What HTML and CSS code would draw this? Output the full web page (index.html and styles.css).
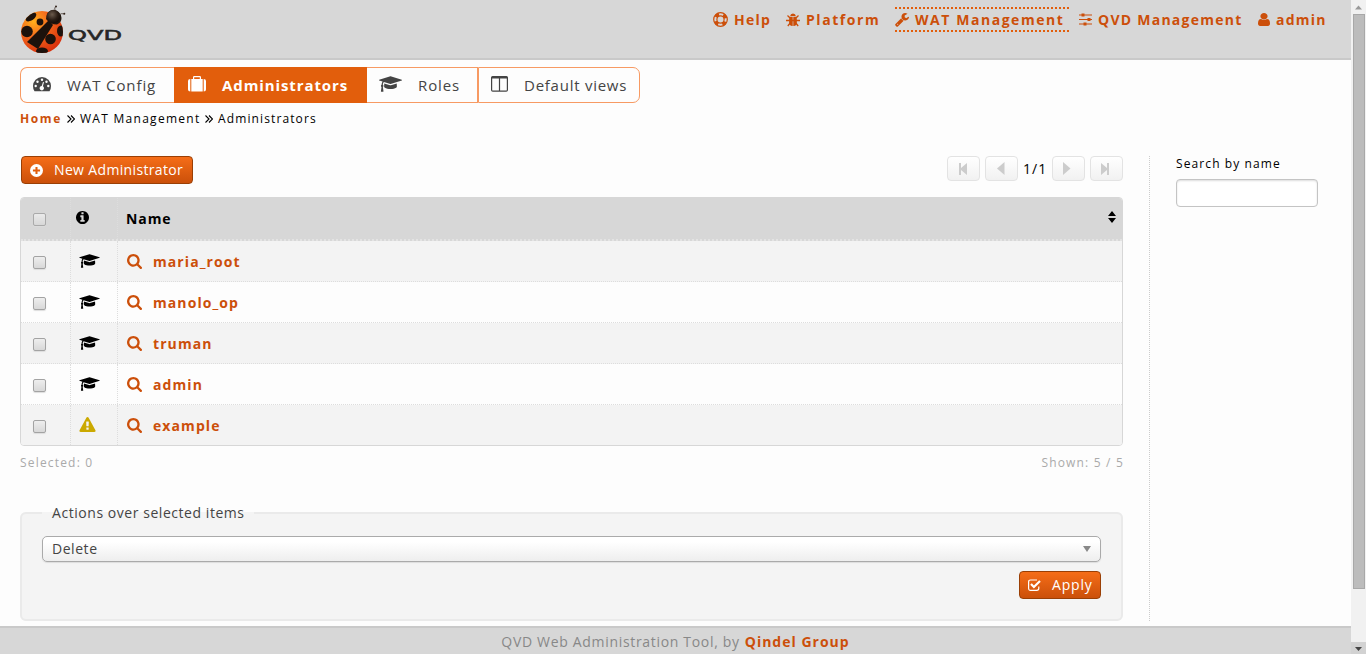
FILE: index.html
```html
<!DOCTYPE html>
<html lang="en">
<head>
<meta charset="utf-8">
<title>QVD WAT - Administrators</title>
<link rel="stylesheet" href="styles.css">
</head>
<body>
<svg class="defs" aria-hidden="true">
  <symbol id="cap" viewBox="0 0 2304 1792"><path d="M1774 836l18 316q4 69-82 128t-235 93.5-323 34.5-323-34.5-235-93.5-82-128l18-316 574 181q22 7 48 7t48-7zm530-324q0 23-22 31l-1120 352q-4 1-10 1t-10-1l-652-206q-43 34-71 111.5t-34 178.5q63 36 63 109 0 69-58 107l58 433q2 14-8 25-9 11-24 11h-192q-15 0-24-11-10-11-8-25l58-433q-58-38-58-107 0-73 65-111 11-207 98-330l-333-104q-22-8-22-31t22-31l1120-352q4-1 10-1t10 1l1120 352q22 8 22 31z"/></symbol>
  <symbol id="search" viewBox="64 128 1664 1664"><path d="M1216 832q0-185-131.5-316.5t-316.5-131.5-316.5 131.5-131.5 316.5 131.5 316.5 316.5 131.5 316.5-131.5 131.5-316.5zm512 832q0 52-38 90t-90 38q-54 0-90-38l-343-342q-179 124-399 124-143 0-273.5-55.5t-225-150-150-225-55.5-273.5 55.5-273.5 150-225 225-150 273.5-55.5 273.5 55.5 225 150 150 225 55.5 273.5q0 220-124 399l343 343q37 37 37 90z"/></symbol>
</svg>
<div class="page">
  <div class="content">
    <header class="header">
      <svg class="logo" width="106" height="54" viewBox="0 0 106 54">
        <defs>
          <radialGradient id="shell" cx=".3" cy=".25" r=".8"><stop offset="0" stop-color="#ffb01c"/><stop offset=".45" stop-color="#f4691c"/><stop offset="1" stop-color="#d8300c"/></radialGradient>
          <radialGradient id="head" cx=".4" cy=".35" r=".7"><stop offset="0" stop-color="#6b5a4c"/><stop offset=".6" stop-color="#2a1d15"/><stop offset="1" stop-color="#120a06"/></radialGradient>
          <clipPath id="body"><circle cx="22" cy="32" r="21"/></clipPath>
        </defs>
        <circle cx="22" cy="32" r="21" fill="url(#shell)"/>
        <g clip-path="url(#body)" fill="#1d120c">
          <path d="M29 20L33 25 18 49 7 42Z"/>
          <ellipse cx="7" cy="31.500" rx="5.800" ry="5.800"/>
          <circle cx="20" cy="22" r="3.400"/>
          <ellipse cx="11" cy="17" rx="6" ry="3.300" transform="rotate(-35 11 17)"/>
          <circle cx="30.500" cy="39" r="5.300"/>
          <ellipse cx="41" cy="31" rx="4" ry="5.500"/>
          <ellipse cx="22" cy="51" rx="6" ry="3.500"/>
        </g>
        <path d="M26 19Q26 11 33 10Q41 11 41.500 18Q41.500 22.500 37 24.500Q30 24.500 26 19Z" fill="#21160f"/>
        <circle cx="33.500" cy="16.500" r="6.800" fill="url(#head)"/>
        <path d="M35 11Q34 7 36 6.500M39 15Q41 13 44 13.800" stroke="#33251c" stroke-width=".7" fill="none"/>
        <circle cx="36" cy="6.500" r="1" fill="#33251c"/><circle cx="44.300" cy="13.800" r="1" fill="#33251c"/>
        <text class="brand" x="48" y="40.200" textLength="54" lengthAdjust="spacingAndGlyphs">QVD</text>
      </svg>
      <nav class="menu">
        <a><svg width="15" height="15" viewBox="0 0 15 15" fill="none" stroke="currentColor"><circle cx="7.500" cy="7.500" r="6.800" stroke-width="1.200"/><circle cx="7.500" cy="7.500" r="3.600" stroke-width="1.200"/><circle cx="7.500" cy="7.500" r="5.300" stroke-width="3.400" stroke-dasharray="4 4.325" stroke-dashoffset="-2.160"/></svg>Help</a>
        <a class="spaced"><svg width="14" height="14" viewBox="0 0 14 14"><path fill="currentColor" d="M4.200 3Q4.400.500 7 .500T9.800 3ZM3.400 3.700H6.700V13Q4.500 13 3.600 11.500T3.400 3.700ZM7.300 3.700H10.600Q11.200 10 10.400 11.500T7.300 13Z"/><path d="M1.500 2.500L4 5M12.500 2.500L10 5M0 7.500H14M1.800 13L4.200 10M12.200 13L9.800 10" stroke="currentColor" stroke-width="1.300"/></svg>Platform</a>
        <a class="spaced current"><svg width="14" height="14" viewBox="64 128 1664 1664"><path fill="currentColor" d="M448 1472q0-26-19-45t-45-19-45 19-19 45 19 45 45 19 45-19 19-45zm644-420l-682 682q-37 37-90 37-52 0-91-37l-106-108q-38-36-38-90 0-53 38-91l681-681q39 98 114.500 173.500t173.500 114.500zm634-435q0 39-23 106-47 134-164.500 217.500t-258.500 83.500q-185 0-316.500-131.500t-131.500-316.500 131.500-316.500 316.500-131.500q58 0 121.500 16.500t107.500 46.500q16 11 16 28t-16 28l-293 169v224l193 107q5-3 79-48.500t135.500-81 70.500-35.500q15 0 23.500 10t8.500 25z"/></svg>WAT Management</a>
        <a><svg width="13" height="13" viewBox="0 0 13 13"><path d="M0 2H13M0 6.500H13M0 11H13" stroke="currentColor" stroke-width="1.200"/><path fill="currentColor" d="M2.500.500h3v3h-3zM8.500 5h3v3h-3zM4.500 9.500h3v3h-3z"/></svg>QVD Management</a>
        <a><svg width="12" height="13" viewBox="256 128 1280 1536" preserveAspectRatio="none"><path fill="currentColor" d="M1536 1399q0 109-62.500 187t-150.500 78h-854q-88 0-150.500-78t-62.500-187q0-85 8.500-160.500t31.500-152 58.500-131 94-89 134.500-34.500q131 128 313 128t313-128q76 0 134.500 34.500t94 89 58.500 131 31.500 152 8.500 160.500zm-256-887q0 159-112.500 271.500t-271.500 112.500-271.500-112.500-112.500-271.500 112.500-271.500 271.500-112.500 271.500 112.500 112.500 271.500z"/></svg>admin</a>
      </nav>
    </header>

    <div class="tabs">
      <a class="tab tab-config"><svg width="18" height="15" viewBox="0 0 18 15"><path fill="currentColor" d="M0 9A9 9 0 0 1 18 9Q18 12 16.500 14.300H1.500Q0 12 0 9Z"/><g fill="#fdfdfd"><circle cx="2.700" cy="9" r="1.200"/><circle cx="4.500" cy="4.700" r="1.200"/><circle cx="9" cy="2.800" r="1.200"/><circle cx="13.500" cy="4.700" r="1.200"/><circle cx="15.300" cy="9" r="1.200"/><path d="M10 5L11 5.200 9.900 9.300A2.200 2.200 0 1 1 8.700 9Z"/></g></svg><span>WAT Config</span></a>
      <a class="tab tab-admins"><svg width="18" height="16" viewBox="0 0 18 16"><path fill="currentColor" d="M2.300 3V15.500Q0 15.500 0 13.500V5Q0 3 2.300 3ZM3.300 3H5V1.200Q5 0 6.200 0H11.800Q13 0 13 1.200V3H14.700V15.500H3.300ZM6.200 3H11.800V1.300H6.200ZM15.700 3Q18 3 18 5V13.500Q18 15.500 15.700 15.500Z"/></svg><span>Administrators</span></a>
      <a class="tab tab-roles"><svg width="23" height="18"><use href="#cap" fill="currentColor"/></svg><span>Roles</span></a>
      <a class="tab tab-views"><svg width="17" height="16" viewBox="0 0 17 16"><path fill="none" stroke="currentColor" stroke-width="1.200" d="M.600 1.500V14Q.600 15.200 1.800 15.200H15.200Q16.400 15.200 16.400 14V1.500M8.500 2V15"/><path fill="currentColor" d="M0 2.500V1.500Q0 0 1.500 0H15.500Q17 0 17 1.500V2.500Z"/></svg><span>Default views</span></a>
    </div>
    <div class="crumbs"><b>Home</b><svg width="8" height="8" viewBox="0 0 8 8"><path d="M.500.500L4 4 .500 7.500M4 .500L7.500 4 4 7.500" fill="none" stroke="currentColor" stroke-width="1.100"/></svg><span class="crumb-parent">WAT Management</span><svg width="8" height="8" viewBox="0 0 8 8"><path d="M.500.500L4 4 .500 7.500M4 .500L7.500 4 4 7.500" fill="none" stroke="currentColor" stroke-width="1.100"/></svg><span class="crumb-page">Administrators</span></div>

    <main class="main">
      <section class="list">
        <div class="toolbar">
          <a class="button new"><svg width="13" height="13" viewBox="0 0 12 12"><circle cx="6" cy="6" r="6" fill="#fff"/><path d="M6 2.700V9.300M2.700 6H9.300" stroke="#e25e0c" stroke-width="1.900"/></svg>New Administrator</a>
          <div class="pager">
            <span class="page-button"><svg width="12" height="14"><path d="M2 1h2v5l6-5v12l-6-5v5h-2z" fill="#ccc"/></svg></span>
            <span class="page-button"><svg width="12" height="14"><path d="M9.500 0v13l-7.500-6.500z" fill="#ccc"/></svg></span>
            <span class="page-count">1/1</span>
            <span class="page-button"><svg width="12" height="14"><path d="M1 0v13l7.500-6.500z" fill="#ccc"/></svg></span>
            <span class="page-button"><svg width="12" height="14"><path d="M1 1l6 5v-5h2v12h-2v-5l-6 5z" fill="#ccc"/></svg></span>
          </div>
        </div>
        <div class="table">
          <div class="row head"><div><i class="check faded"></i></div><div><svg class="info" width="13" height="13" viewBox="128 128 1536 1536"><path d="M1152 1376v-160q0-14-9-23t-23-9h-96v-512q0-14-9-23t-23-9h-320q-14 0-23 9t-9 23v160q0 14 9 23t23 9h96v320h-96q-14 0-23 9t-9 23v160q0 14 9 23t23 9h448q14 0 23-9t9-23zm-128-896v-160q0-14-9-23t-23-9h-192q-14 0-23 9t-9 23v160q0 14 9 23t23 9h192q14 0 23-9t9-23zm640 416q0 209-103 385.500t-279.500 279.500-385.500 103-385.500-103-279.500-279.500-103-385.500 103-385.500 279.500-279.500 385.500-103 385.500 103 279.500 279.500 103 385.500z"/></svg></div><div>Name<svg class="sort" width="8" height="12"><path d="M0 5l4-5 4 5zM0 7h8l-4 5z"/></svg></div></div>
          <div class="row odd"><div><i class="check"></i></div><div><svg width="21" height="16"><use href="#cap"/></svg></div><div><svg width="15" height="15"><use href="#search" fill="currentColor"/></svg><span>maria_root</span></div></div>
          <div class="row"><div><i class="check"></i></div><div><svg width="21" height="16"><use href="#cap"/></svg></div><div><svg width="15" height="15"><use href="#search" fill="currentColor"/></svg><span>manolo_op</span></div></div>
          <div class="row odd"><div><i class="check"></i></div><div><svg width="21" height="16"><use href="#cap"/></svg></div><div><svg width="15" height="15"><use href="#search" fill="currentColor"/></svg><span>truman</span></div></div>
          <div class="row"><div><i class="check"></i></div><div><svg width="21" height="16"><use href="#cap"/></svg></div><div><svg width="15" height="15"><use href="#search" fill="currentColor"/></svg><span>admin</span></div></div>
          <div class="row odd"><div><i class="check"></i></div><div><svg class="warning" width="17" height="15" viewBox="0 0 1792 1664"><path fill="#cba900" d="M1024 1375v-190q0-14-9.500-23.500t-22.500-9.500h-192q-13 0-22.500 9.500t-9.500 23.500v190q0 14 9.500 23.500t22.500 9.500h192q13 0 22.500-9.500t9.500-23.500zm-2-374l18-459q0-12-10-19-13-11-24-11h-220q-11 0-24 11-10 7-10 21l17 457q0 10 10 16.500t24 6.500h185q14 0 23.500-6.500t10.500-16.500zm-14-934l768 1408q35 63-2 126-17 29-46.500 46t-63.500 17h-1536q-34 0-63.500-17t-46.500-46q-37-63-2-126l768-1408q17-31 47-49t65-18 65 18 47 49z"/></svg></div><div><svg width="15" height="15"><use href="#search" fill="currentColor"/></svg><span>example</span></div></div>
        </div>
        <div class="totals"><span>Selected: 0</span><span class="shown">Shown: 5 / 5</span></div>
        <fieldset class="actions">
          <legend>Actions over selected items</legend>
          <div class="select"><span>Delete</span><svg width="8" height="6"><path d="M0 0h8l-4 6z" fill="#888"/></svg></div>
          <a class="button apply"><svg width="13" height="12" viewBox="0 0 13 12"><path d="M10.800 7.500V9.300Q10.800 11.300 8.800 11.300H2.600Q.600 11.300 .600 9.300V3Q.600 1 2.600 1H9" fill="none" stroke="#fff" stroke-width="1.200"/><path d="M3 5L5.900 8L12 2" fill="none" stroke="#fff" stroke-width="2.200"/></svg>Apply</a>
        </fieldset>
      </section>
      <aside class="filter"><label for="name">Search by name</label><input id="name" type="text"></aside>
    </main>
    <footer class="footer"><span>QVD Web Administration Tool, by</span> <b>Qindel Group</b></footer>
  </div>
  <div class="scrollbar"><svg width="15" height="14"><path d="M4 9.500l3.500-4 3.500 4z" fill="#999"/></svg><div class="thumb"></div><svg class="down" width="15" height="12"><path d="M4 5h7l-3.500 4z" fill="#444"/></svg></div>
</div>
</body>
</html>
```
FILE: styles.css
```css
* { box-sizing: border-box; }
body { margin: 0; background: #fdfdfd; color: #000; font: 14px/20px "Open Sans", "Noto Sans", sans-serif; letter-spacing: 1px; white-space: nowrap; }
svg { display: block; flex: none; }
.defs { display: none; }
.page { display: flex; height: 654px; overflow: hidden; }
.content { width: 1351px; display: flex; flex-direction: column; }
.header { height: 60px; background: #d7d7d7; border-bottom: 2px solid #c9c9c9; display: flex; justify-content: space-between; padding-left: 20px; }
.brand { font: 14px "DejaVu Sans", sans-serif; fill: #262626; stroke: #262626; stroke-width: .5; letter-spacing: 0; }
.menu { display: grid; grid-template-columns: 73px 109px 184px 179px 93px; padding-top: 7px; color: #cc4f0a; font-weight: bold; letter-spacing: 1.25px; }
.menu a { display: flex; align-items: center; gap: 6px; height: 25px; }
.menu .spaced { letter-spacing: 1.55px; }
.menu .current { width: 174px; border: dotted #e25e0c; border-width: 2px 0; }
.tabs { display: flex; margin: 7px 0 0 20px; height: 36px; color: #444; font-size: 15px; letter-spacing: .9px; }
.tab { display: flex; align-items: center; gap: 16px; border: 1px solid #f79a63; padding-left: 12px; height: 36px; }
.tab svg { margin-bottom: 2px; }
.tab span { margin-bottom: 1px; }
.tab-config { width: 154px; border-radius: 7px 0 0 7px; border-right: 0; }
.tab-admins { width: 193px; background: #e25e0c; border-color: #e25e0c; color: #fff; font-weight: bold; padding-left: 13px; }
.tab-roles { width: 111px; border-left: 0; }
.tab-views { width: 162px; border-radius: 0 7px 7px 0; letter-spacing: .75px; }
.crumbs { display: flex; align-items: center; height: 20px; margin: 6px 0 0 20px; font-size: 12px; }
.crumbs b { width: 47px; color: #cc4f0a; letter-spacing: 1.6px; }
.crumbs span { margin-left: 5px; }
.crumb-parent { width: 120px; margin-right: 5px; letter-spacing: 1.28px; }
.crumb-page { letter-spacing: 1.12px; }
.main { display: flex; margin-top: 26px; height: 471px; }
.list { width: 1150px; padding: 0 26px 0 20px; margin-top: 1px; border-right: 1px dotted #ccc; height: 465px; }
.toolbar { display: flex; justify-content: space-between; height: 41px; }
.button { display: flex; align-items: center; height: 28px; border: 1px solid #9a3f05; border-radius: 4px; background: linear-gradient(#f56d18, #cb500a); color: #fff; padding-left: 8px; }
.new { width: 172px; margin-left: 1px; gap: 11px; letter-spacing: .35px; }
.pager { display: flex; gap: 5px; }
.page-button { width: 33px; height: 25px; border: 1px solid #e3e3e3; border-radius: 4px; background: linear-gradient(#fff, #f1f1f1); padding: 5px 0 0 9px; }
.page-count { width: 24px; line-height: 26px; }
.table { height: 249px; border: 1px solid #d7d7d7; border-radius: 4px; overflow: hidden; }
.row { display: grid; grid-template-columns: 50px 47px 1fr; height: 41px; border-bottom: 1px dotted #ddd; }
.row > div { display: flex; align-items: center; border-right: 1px dotted #ddd; }
.row > div:last-child { border-right: 0; padding-left: 9px; gap: 11px; color: #cc4f0a; font-weight: bold; }
.row span { margin-top: 2px; letter-spacing: 1.08px; }
.row > div:first-child { padding: 2px 0 0 12px; }
.row > div:nth-child(2) { padding-left: 8px; }
.row:last-child { border-bottom: 0; height: 40px; }
.odd { background: #f3f3f3; }
.row.head { height: 43px; background: #d7d7d7; border-bottom: 2px dotted #e3e3e3; }
.row.head > div:nth-child(2) { padding: 0 0 3px 5px; }
.row.head > div:last-child { color: #000; padding-left: 8px; letter-spacing: .9px; }
.sort { margin: 0 6px 3px auto; }
.check { width: 13px; height: 13px; border: 1px solid #a3a3a3; border-radius: 2px; background: linear-gradient(#eee, #d8d8d8); box-shadow: 0 1px 1px #ddd; }
.faded { opacity: .85; }
.warning { margin-bottom: 2px; }
.totals { display: flex; justify-content: space-between; height: 35px; padding-top: 7px; color: #aaa; font-size: 12px; letter-spacing: 1.18px; }
.shown { margin-right: -1px; }
.actions { position: relative; margin: 31px 0 0; height: 109px; border: 2px solid #eaeaea; border-radius: 6px; background: #f4f4f4; padding: 22px 20px 0; color: #444; min-width: 0; letter-spacing: .55px; }
.actions legend { position: absolute; top: -11px; left: 20px; width: 212px; padding-left: 10px; background: linear-gradient(#fdfdfd 9px, #f4f4f4 9px); }
.select { height: 26px; border: 1px solid #aaa; border-radius: 5px; background: linear-gradient(#fff 20%, #eee); box-shadow: 0 1px 1px #ddd; display: flex; align-items: center; justify-content: space-between; padding: 0 9px; }
.apply { width: 82px; gap: 11px; margin: 9px 0 0 auto; letter-spacing: .8px; }
.filter { padding-left: 26px; font-size: 12px; letter-spacing: 1.1px; }
.filter label { display: block; height: 24px; line-height: 18px; }
.filter input { display: block; width: 142px; height: 28px; border: 1px solid #c4c4c4; border-radius: 4px; background: #fff; box-shadow: inset 0 1px 2px #ddd; }
.footer { height: 28px; border-top: 2px solid #c9c9c9; background: #d7d7d7; color: #888; display: flex; justify-content: center; gap: 5px; padding-top: 4px; letter-spacing: .68px; }
.footer b { color: #cc4f0a; letter-spacing: 1px; }
.scrollbar { width: 15px; background: #f1f1f1; display: flex; flex-direction: column; }
.thumb { width: 12px; height: 575px; margin-left: 2px; background: #bcbcbc; border: 1px solid #a8a8a8; }
.down { margin-top: auto; background: #d2d2d2; }
```
